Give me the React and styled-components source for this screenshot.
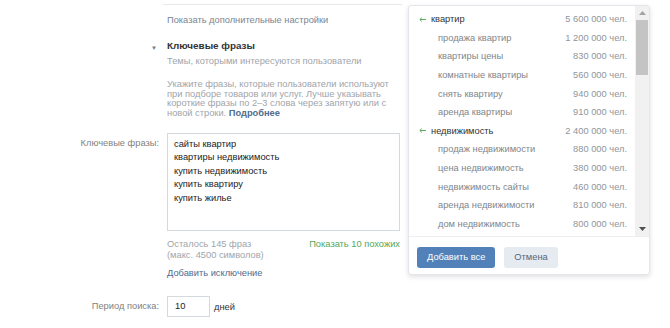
import React from "react";
import styled, { createGlobalStyle } from "styled-components";

const Global = createGlobalStyle`
  html, body { margin: 0; padding: 0; background: #fff; }
  body { font-family: "Liberation Sans", Arial, sans-serif; }
`;

const FS = "9.3px";

const Page = styled.div`
  position: relative;
  width: 670px;
  height: 328px;
  overflow: hidden;
  background: #fff;
`;

const Form = styled.div`
  display: grid;
  grid-template-columns: 159px 233px;
  column-gap: 8px;
  padding-top: 4px;
`;

const Divider = styled.div`
  grid-column: 2;
  height: 1px;
  background: #e7e8ec;
  margin-left: -4px;
  margin-right: -2px;
`;

const Label = styled.div`
  grid-column: 1;
  text-align: right;
  font-size: ${FS};
  color: #828282;
  margin-top: ${(p) => p.$mt || 0}px;
  line-height: ${(p) => p.$lh || 14}px;
`;

const Cell = styled.div`
  grid-column: 2;
  margin-top: ${(p) => p.$mt || 0}px;
  font-size: ${FS};
  line-height: 14px;
`;

const Link = styled.div`
  color: ${(p) => p.$color || "#7a8594"};
  font-size: ${FS};
  line-height: 14px;
`;

const Triangle = styled.div`
  grid-column: 1;
  justify-self: end;
  margin-right: 2px;
  margin-top: 14px;
  color: #6f7a87;
  font-size: 6px;
  line-height: 14px;
`;

const Title = styled.div`
  font-weight: bold;
  font-size: 9.9px;
  color: #333;
  line-height: 14px;
`;

const Muted = styled.div`
  color: #a0a5ab;
  font-size: ${FS};
  line-height: ${(p) => p.$lh || 14}px;
`;

const More = styled.span`
  color: #4d6c8f;
  font-weight: bold;
`;

const TextArea = styled.div`
  box-sizing: border-box;
  height: 98px;
  border: 1px solid #d3d9de;
  padding: 4px 6px;
  font-size: ${FS};
  line-height: 13.4px;
  color: #222;
`;

const Hints = styled.div`
  display: flex;
  justify-content: space-between;
  margin-top: 8px;
`;

const Green = styled.div`
  color: #55a85a;
  font-size: ${FS};
  line-height: 11px;
`;

const PeriodRow = styled.div`
  display: flex;
  align-items: center;
  gap: 4px;
`;

const SmallInput = styled.div`
  box-sizing: border-box;
  width: 43px;
  height: 21px;
  border: 1px solid #d3d9de;
  padding: 0 7px;
  font-size: ${FS};
  line-height: 19px;
  color: #222;
`;

const Unit = styled.span`
  font-size: ${FS};
  color: #333;
`;

/* dropdown popup */
const Popup = styled.div`
  position: absolute;
  left: 408px;
  top: 5px;
  width: 242px;
  height: 270px;
  box-sizing: border-box;
  background: #fff;
  border: 1px solid #e3e6ea;
  border-radius: 3px;
  box-shadow: 0 2px 5px rgba(0, 0, 0, 0.12);
  display: flex;
  flex-direction: column;
`;

const ListArea = styled.div`
  display: flex;
  height: 230px;
  border-bottom: 1px solid #eceef1;
`;

const List = styled.div`
  flex: 1;
  padding: 4px 8px 0 10px;
`;

const Row = styled.div`
  display: flex;
  align-items: center;
  height: 18.6px;
  font-size: ${FS};
  color: ${(p) => (p.$head ? "#333" : "#80868d")};
  padding-left: ${(p) => (p.$head ? 0 : 19)}px;
`;

const Arrow = styled.span`
  display: flex;
  align-items: center;
  width: 12px;
`;

const Name = styled.span`
  flex: 1;
`;

const Count = styled.span`
  color: #8f959b;
`;

const Scrollbar = styled.div`
  width: 14px;
  background: #f1f1f1;
  display: flex;
  flex-direction: column;
  align-items: center;
`;

const ScrollArrow = styled.div`
  height: 14px;
  display: flex;
  align-items: center;
  justify-content: center;
`;

const Thumb = styled.div`
  width: 12px;
  height: 55px;
  background: #c4c4c4;
`;

const Spacer = styled.div`
  flex: 1;
`;

const Footer = styled.div`
  display: flex;
  gap: 9px;
  padding: 10px 0 0 8px;
`;

const Button = styled.div`
  height: 21px;
  padding: 0 10px;
  border-radius: 3px;
  background: ${(p) => (p.$primary ? "#5181b8" : "#e5ebf1")};
  color: ${(p) => (p.$primary ? "#fff" : "#55677d")};
  font-size: ${FS};
  line-height: 21px;
`;

const groups = [
  {
    head: ["квартир", "5 600 000 чел."],
    items: [
      ["продажа квартир", "1 200 000 чел."],
      ["квартиры цены", "830 000 чел."],
      ["комнатные квартиры", "560 000 чел."],
      ["снять квартиру", "940 000 чел."],
      ["аренда квартиры", "910 000 чел."],
    ],
  },
  {
    head: ["недвижимость", "2 400 000 чел."],
    items: [
      ["продаж недвижимости", "880 000 чел."],
      ["цена недвижимость", "380 000 чел."],
      ["недвижимость сайты", "460 000 чел."],
      ["аренда недвижимости", "810 000 чел."],
      ["дом недвижимость", "800 000 чел."],
    ],
  },
];

const phrases = [
  "сайты квартир",
  "квартиры недвижимость",
  "купить недвижимость",
  "купить квартиру",
  "купить жилье",
];

const BackArrow = () => (
  <svg width="7" height="5" viewBox="0 0 7 5">
    <path
      d="M7 2.5 H1 M2.8 0.6 L0.8 2.5 L2.8 4.4"
      stroke="#5aae5f"
      strokeWidth="1"
      fill="none"
    />
  </svg>
);

export default function App() {
  return (
    <Page>
      <Global />
      <Form>
        <Divider />
        <Cell $mt={8}>
          <Link>Показать дополнительные настройки</Link>
        </Cell>
        <Triangle>▼</Triangle>
        <Cell $mt={12}>
          <Title>Ключевые фразы</Title>
          <Muted $lh={16}>Темы, которыми интересуются пользователи</Muted>
        </Cell>
        <Cell $mt={11}>
          <Muted $lh={9.5}>
            Укажите фразы, которые пользователи используют
            <br />
            при подборе товаров или услуг. Лучше указывать
            <br />
            короткие фразы по 2–3 слова через запятую или с
            <br />
            новой строки. <More>Подробнее</More>
          </Muted>
        </Cell>
        <Label $mt={15} $lh={20}>Ключевые фразы:</Label>
        <Cell $mt={15}>
          <TextArea>
            {phrases.map((p) => (
              <div key={p}>{p}</div>
            ))}
          </TextArea>
          <Hints>
            <Muted $lh={11}>
              Осталось 145 фраз
              <br />
              (макс. 4500 символов)
            </Muted>
            <Green>Показать 10 похожих</Green>
          </Hints>
        </Cell>
        <Cell $mt={5}>
          <Link $color="#4d6c8f">Добавить исключение</Link>
        </Cell>
        <Label $mt={16} $lh={21}>Период поиска:</Label>
        <Cell $mt={16}>
          <PeriodRow>
            <SmallInput>10</SmallInput>
            <Unit>дней</Unit>
          </PeriodRow>
        </Cell>
      </Form>

      <Popup>
        <ListArea>
          <List>
            {groups.map((g) => (
              <React.Fragment key={g.head[0]}>
                <Row $head>
                  <Arrow>
                    <BackArrow />
                  </Arrow>
                  <Name>{g.head[0]}</Name>
                  <Count>{g.head[1]}</Count>
                </Row>
                {g.items.map(([n, c]) => (
                  <Row key={n}>
                    <Name>{n}</Name>
                    <Count>{c}</Count>
                  </Row>
                ))}
              </React.Fragment>
            ))}
          </List>
          <Scrollbar>
            <ScrollArrow>
              <svg width="7" height="4" viewBox="0 0 7 4">
                <path d="M0 4 L3.5 0 L7 4 Z" fill="#a3a3a3" />
              </svg>
            </ScrollArrow>
            <Thumb />
            <Spacer />
            <ScrollArrow>
              <svg width="7" height="4" viewBox="0 0 7 4">
                <path d="M0 0 L3.5 4 L7 0 Z" fill="#505050" />
              </svg>
            </ScrollArrow>
          </Scrollbar>
        </ListArea>
        <Footer>
          <Button $primary>Добавить все</Button>
          <Button>Отмена</Button>
        </Footer>
      </Popup>
    </Page>
  );
}
